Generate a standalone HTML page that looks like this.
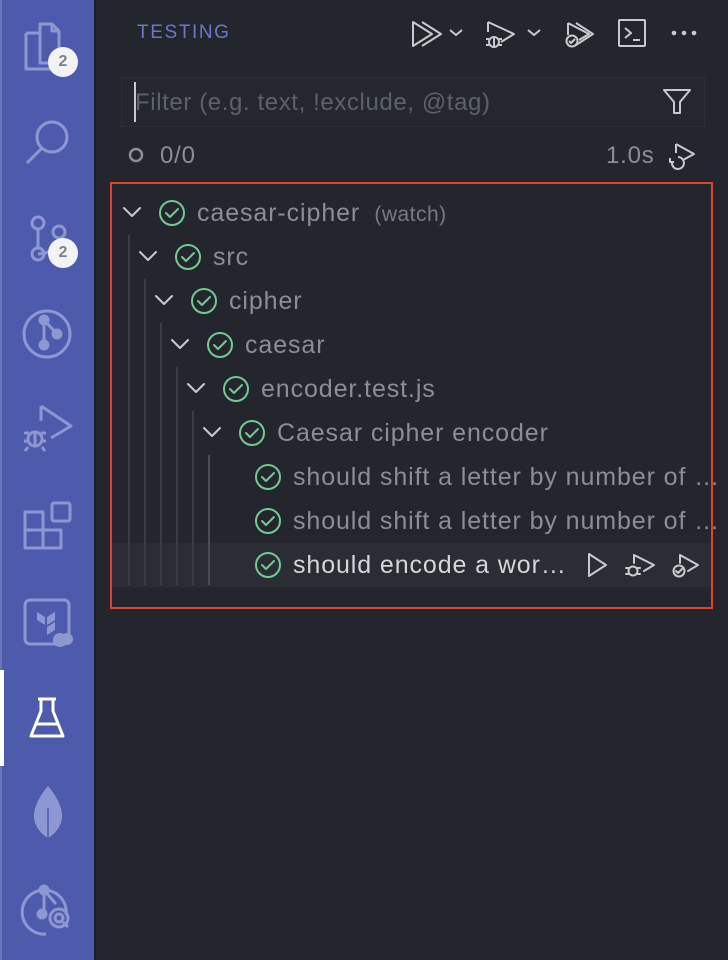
<!DOCTYPE html>
<html><head><meta charset="utf-8"><style>
*{margin:0;padding:0;box-sizing:border-box}
body{width:728px;height:960px;background:#24262d;font-family:"Liberation Sans",sans-serif;position:relative;overflow:hidden}
.bar{position:absolute;left:0;top:0;width:94px;height:960px;background:#4e5aab;border-left:2px solid #6b75bd}
.sep{position:absolute;left:94px;top:0;width:2px;height:960px;background:#1e2026}
.ab{position:absolute;left:0;width:94px}
.badge{position:absolute;width:30px;height:30px;border-radius:15px;background:#f2f3f5;color:#7a8288;font-weight:bold;font-size:16px;text-align:center;line-height:30px}
.abs{position:absolute}
.t{position:absolute;font-size:25px;letter-spacing:0.9px;color:#8b8e99;white-space:nowrap;line-height:44px}
.g{position:absolute;width:2px;background:#3a3d45}
</style></head><body>
<div class="bar"></div><div class="sep"></div>
<div class="abs" style="left:0;top:670px;width:4px;height:96px;background:#fff"></div>
<svg class="ab" style="top:0" width="94" height="960" fill="none" stroke="#8f97d3" stroke-width="3" stroke-linejoin="round">
<path d="M40 24h12l7 7v32H40z M26 33h14 M26 33v36h24v-6"/>
<path d="M52 24v7h7"/>
<circle cx="52" cy="137" r="15"/><path d="M42 148L27 163"/>
<circle cx="38" cy="223" r="6"/><circle cx="38" cy="254" r="6"/><circle cx="59" cy="232" r="6"/><path d="M38 229v19 M59 238c0 10-12 16-21 16"/>
<circle cx="47" cy="334" r="23"/>
<circle cx="44" cy="320" r="4" fill="#8f97d3"/><circle cx="57" cy="334" r="4" fill="#8f97d3"/><circle cx="44" cy="345" r="4" fill="#8f97d3"/><path d="M44 320v25 M44 320l13 14"/>
<path d="M41 406l30 20-20 12 M41 406v15"/>
<circle cx="35" cy="439" r="7"/><path d="M24 433h5 M24 441h5 M41 433h5 M41 441h5 M28 447l-3 4 M42 447l3 4 M35 432v14"/>
<path d="M25 512h18v36H25z M25 530h36v18H43"/><rect x="52" y="503" width="18" height="18" rx="2"/>
<rect x="25" y="600" width="44" height="44" rx="5"/>
<path d="M37 612l8 5v8l-8-5z M47 617l8-5v8l-8 5z M47 627l8-5v8l-8 5z" fill="#8f97d3" stroke="none"/>
<circle cx="60" cy="640" r="7" fill="#8f97d3" stroke="none"/><circle cx="67" cy="639" r="6" fill="#8f97d3" stroke="none"/>
<path d="M38 699h18 M41 699v12l-10 25h32l-10-25v-12" stroke="#fff"/>
<path d="M36 724h22" stroke="#fff"/>
<path d="M48 786c-10 12-14 22-14 30 0 10 7 18 14 22 7-4 14-12 14-22 0-8-4-18-14-30z" fill="#8f97d3" stroke="none"/>
<path d="M48 808v38" stroke="#4e5aab" stroke-width="1.5"/>
<path d="M66 915a22 22 0 1 0-20 19"/><circle cx="44" cy="890" r="4" fill="#8f97d3"/><circle cx="42" cy="914" r="4" fill="#8f97d3"/><path d="M44 890v24 M44 890l12 14"/>
<circle cx="59" cy="918" r="9"/><circle cx="59" cy="918" r="4"/><path d="M63 922l5 5"/>
</svg>
<div class="badge" style="left:48px;top:47px">2</div>
<div class="badge" style="left:48px;top:238px">2</div>

<div class="abs" style="left:137px;top:22px;font-size:19px;color:#6b77c8;letter-spacing:1.6px">TESTING</div>
<svg class="abs" style="left:400px;top:0" width="328" height="70" fill="none" stroke="#c8cad0" stroke-width="2" stroke-linejoin="round">
<path d="M13 22v24l19-12z M22 22l19 12-19 12"/><path d="M50 30l6 5 6-5"/>
<path d="M88 22v10 M88 22l26 12-13 8"/><circle cx="94" cy="42" r="5"/><path d="M86 39h3 M86 45h3 M99 39h3 M99 45h3 M94 37v10"/><path d="M128 30l6 5 6-5"/>
<path d="M168 23v12 M168 23l21 11-10 6 M176 23l17 11-17 11"/><circle cx="172" cy="41" r="5.5"/><path d="M169 41l2 2 4-4"/>
<rect x="219" y="20" width="26" height="26" rx="1"/><path d="M225 28l6 5-6 5 M233 40h7"/>
<circle cx="274" cy="33" r="1.3" fill="#c8cad0"/><circle cx="284" cy="33" r="1.3" fill="#c8cad0"/><circle cx="294" cy="33" r="1.3" fill="#c8cad0"/>
</svg>

<div class="abs" style="left:121px;top:77px;width:584px;height:50px;border:1px solid #2c2f37;background:#25272e"></div>
<div class="abs" style="left:134px;top:82px;width:2px;height:40px;background:#c8cad0"></div>
<div class="abs" style="left:135px;top:89px;font-size:24px;letter-spacing:0.6px;color:#5d616b">Filter (e.g. text, !exclude, @tag)</div>
<svg class="abs" style="left:660px;top:87px" width="36" height="30" fill="none" stroke="#c8cad0" stroke-width="2" stroke-linejoin="round"><path d="M4 3h26l-10 12v11h-6V15z"/></svg>

<svg class="abs" style="left:126px;top:145px" width="20" height="20"><circle cx="10" cy="10" r="6" fill="none" stroke="#8b8e99" stroke-width="2.5"/></svg>
<div class="abs" style="left:160px;top:142px;font-size:24px;letter-spacing:0.8px;color:#8b8e99">0/0</div>
<div class="abs" style="left:606px;top:142px;font-size:24px;letter-spacing:0.8px;color:#8b8e99">1.0s</div>
<svg class="abs" style="left:664px;top:140px" width="34" height="34" fill="none" stroke="#c8cad0" stroke-width="2" stroke-linejoin="round"><path d="M12 4v9 M12 4l18 10-11 6"/><path d="M8 22a6 6 0 1 0 6-5"/><path d="M6 18v4h4"/></svg>

<div class="abs" style="left:110px;top:182px;width:603px;height:427px;border:2px solid #e0432d"></div>
<div class="abs" style="left:112px;top:543px;width:599px;height:44px;background:#2a2d33"></div>

<div class="g" style="left:128px;top:235px;height:350px"></div>
<div class="g" style="left:144px;top:279px;height:306px"></div>
<div class="g" style="left:160px;top:323px;height:262px"></div>
<div class="g" style="left:176px;top:367px;height:218px"></div>
<div class="g" style="left:192px;top:411px;height:174px"></div>
<div class="g" style="left:208px;top:455px;height:130px;background:#4a4d55"></div>

<svg class="abs" style="left:0;top:0" width="728" height="960" fill="none" stroke-linecap="round" stroke-linejoin="round">
<g stroke="#c8cad0" stroke-width="2">
<path d="M124 208l8 8 8-8"/><path d="M140 252l8 8 8-8"/><path d="M156 296l8 8 8-8"/><path d="M172 340l8 8 8-8"/><path d="M188 384l8 8 8-8"/><path d="M204 428l8 8 8-8"/>
</g>
<g stroke="#73c991" stroke-width="2">
<circle cx="172" cy="213" r="12"/><path d="M166 213l4 4 8-8"/>
<circle cx="188" cy="257" r="12"/><path d="M182 257l4 4 8-8"/>
<circle cx="204" cy="301" r="12"/><path d="M198 301l4 4 8-8"/>
<circle cx="220" cy="345" r="12"/><path d="M214 345l4 4 8-8"/>
<circle cx="236" cy="389" r="12"/><path d="M230 389l4 4 8-8"/>
<circle cx="252" cy="433" r="12"/><path d="M246 433l4 4 8-8"/>
<circle cx="268" cy="477" r="12"/><path d="M262 477l4 4 8-8"/>
<circle cx="268" cy="521" r="12"/><path d="M262 521l4 4 8-8"/>
<circle cx="268" cy="565" r="12"/><path d="M262 565l4 4 8-8"/>
</g>
<g stroke="#c8cad0" stroke-width="2">
<path d="M589 554v22l17-11z"/>
<path d="M634 555v8 M634 555l20 10-10 6"/><circle cx="633" cy="571" r="4.5"/><path d="M626 568h3 M626 574h3 M637 568h3 M637 574h3"/>
<path d="M680 555v8 M680 555l18 10-10 6"/><circle cx="679" cy="571" r="5.5"/><path d="M676 571l2 2 4-4"/>
</g>
</svg>

<div class="t" style="left:197px;top:191px">caesar-cipher <span style="font-size:21px;letter-spacing:0.5px;color:#777a84">&nbsp;(watch)</span></div>
<div class="t" style="left:213px;top:235px">src</div>
<div class="t" style="left:229px;top:279px">cipher</div>
<div class="t" style="left:245px;top:323px">caesar</div>
<div class="t" style="left:261px;top:367px">encoder.test.js</div>
<div class="t" style="left:277px;top:411px">Caesar cipher encoder</div>
<div class="t" style="left:293px;top:455px">should shift a letter by number of …</div>
<div class="t" style="left:293px;top:499px">should shift a letter by number of …</div>
<div class="t" style="left:293px;top:543px;color:#d4d6dc">should encode a wor…</div>
</body></html>
